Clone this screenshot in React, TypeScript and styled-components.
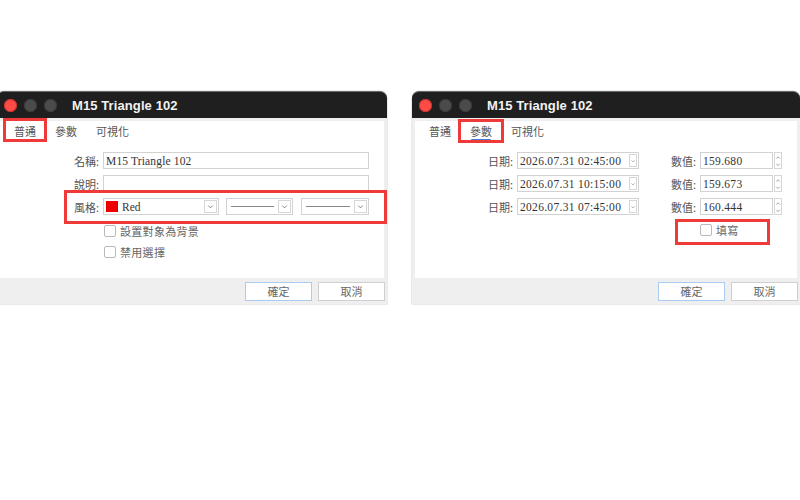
import * as React from "react"
import styled, { createGlobalStyle } from "styled-components"

const GlobalStyle = createGlobalStyle`
  html, body {
    margin: 0;
    background: #ffffff;
    font-family: "Noto Sans CJK TC", "Noto Sans", sans-serif;
  }
`

const CJK = `"Noto Sans CJK TC", "Noto Sans", sans-serif`
const VALUE_FONT = `"Liberation Serif", "Noto Sans CJK TC", serif`

const Chevron: React.FC<{ up?: boolean; size?: number }> = ({ up, size = 9 }) => (
  <svg width={size} height={size} viewBox="0 0 10 10">
    <polyline
      points={up ? "2.5,6.5 5,4 7.5,6.5" : "2.5,4 5,6.5 7.5,4"}
      fill="none"
      stroke="#777"
      strokeWidth="1"
    />
  </svg>
)

interface DialogProps {
  title: string
  tabs: string[]
  activeTab: number
  underline?: boolean
  width: number
  offset?: number
  children: React.ReactNode
  highlights?: { top: number; left: number; width: number; height: number }[]
}

const Dialog: React.FC<DialogProps> = ({
  title,
  tabs,
  activeTab,
  underline,
  width,
  offset = 0,
  children,
  highlights = []
}) => (
  <Window $width={width} $offset={offset}>
    <TitleBar>
      <Lights>
        <Light $color="#fd4b46" $ring="#c9302c" />
        <Light $color="#4b4b4b" $ring="#3a3a3a" />
        <Light $color="#4b4b4b" $ring="#3a3a3a" />
      </Lights>
      <Title>{title}</Title>
    </TitleBar>
    <Panel>
      <TabBar>
        {tabs.map((t, i) => (
          <Tab key={t} $active={underline === true && i === activeTab}>
            {t}
          </Tab>
        ))}
      </TabBar>
      {children}
    </Panel>
    <Footer>
      <FooterButton $primary>確定</FooterButton>
      <FooterButton>取消</FooterButton>
    </Footer>
    {highlights.map((h, i) => (
      <Highlight
        key={i}
        style={{ top: h.top, left: h.left, width: h.width, height: h.height }}
      />
    ))}
  </Window>
)

const App: React.FC = () => {
  const dates = [
    { date: "2026.07.31 02:45:00", value: "159.680" },
    { date: "2026.07.31 10:15:00", value: "159.673" },
    { date: "2026.07.31 07:45:00", value: "160.444" }
  ]

  return (
    <>
      <GlobalStyle />
      <Page>
        <Dialog
          title="M15 Triangle 102"
          tabs={["普通", "參數", "可視化"]}
          activeTab={0}
          width={390}
          offset={-3}
          highlights={[
            { top: 27, left: 6, width: 44, height: 24 },
            { top: 99, left: 67, width: 323, height: 34 }
          ]}
        >
          <GeneralForm>
            <Label>名稱:</Label>
            <TextInput>M15 Triangle 102</TextInput>
            <Label>說明:</Label>
            <TextInput />
            <Label>風格:</Label>
            <StyleRow>
              <Combo $width={116}>
                <Swatch />
                <ComboText>Red</ComboText>
                <DropButton>
                  <Chevron />
                </DropButton>
              </Combo>
              <Combo $width={67}>
                <LineSample />
                <DropButton>
                  <Chevron />
                </DropButton>
              </Combo>
              <Combo $width={68}>
                <LineSample />
                <DropButton>
                  <Chevron />
                </DropButton>
              </Combo>
            </StyleRow>
            <CheckList>
              <CheckRow>
                <CheckBox />
                <CheckLabel>設置對象為背景</CheckLabel>
              </CheckRow>
              <CheckRow>
                <CheckBox />
                <CheckLabel>禁用選擇</CheckLabel>
              </CheckRow>
            </CheckList>
          </GeneralForm>
        </Dialog>

        <Dialog
          title="M15 Triangle 102"
          tabs={["普通", "參數", "可視化"]}
          activeTab={1}
          underline
          width={388}
          highlights={[
            { top: 28, left: 46, width: 46, height: 24 },
            { top: 128, left: 263, width: 95, height: 26 }
          ]}
        >
          <ParamsForm>
            {dates.map((d) => (
              <React.Fragment key={d.date}>
                <Label>日期:</Label>
                <DateInput>
                  <ValueText>{d.date}</ValueText>
                  <SmallDrop>
                    <Chevron size={8} />
                  </SmallDrop>
                </DateInput>
                <Label>數值:</Label>
                <NumberInput>
                  <ValueText>{d.value}</ValueText>
                </NumberInput>
                <Spin>
                  <Chevron up size={8} />
                  <Chevron size={8} />
                </Spin>
              </React.Fragment>
            ))}
            <FillRow>
              <CheckBox />
              <CheckLabel>填寫</CheckLabel>
            </FillRow>
          </ParamsForm>
        </Dialog>
      </Page>
    </>
  )
}

const Page = styled.div`
  width: 800px;
  height: 500px;
  overflow: hidden;
  display: flex;
  align-items: flex-start;
  gap: 25px;
  padding-top: 91px;
  box-sizing: border-box;
`

const Window = styled.div<{ $width: number; $offset: number }>`
  position: relative;
  flex: none;
  width: ${(p) => p.$width}px;
  margin-left: ${(p) => p.$offset}px;
  background: #efefef;
  border-radius: 7px 7px 0 0;
  box-shadow: 0 0 0 0.5px #d6d6d6;
`

const TitleBar = styled.div`
  height: 27px;
  display: flex;
  align-items: center;
  padding-left: 7px;
  background: #1f1f1f;
  border-top: 1px solid #6a6a6a;
  border-radius: 7px 7px 0 0;
  box-sizing: border-box;
`

const Lights = styled.div`
  display: flex;
  gap: 7px;
`

const Light = styled.span<{ $color: string; $ring: string }>`
  width: 13px;
  height: 13px;
  border-radius: 50%;
  background: ${(p) => p.$color};
  box-shadow: inset 0 0 0 1px ${(p) => p.$ring};
`

const Title = styled.div`
  margin-left: 15px;
  color: #f2f2f2;
  font-family: "Liberation Sans", Arial, sans-serif;
  font-weight: 700;
  font-size: 13px;
  letter-spacing: 0.1px;
`

const Panel = styled.div`
  margin: 3px 3px 0;
  height: 157px;
  background: #ffffff;
  box-sizing: border-box;
`

const TabBar = styled.div`
  display: flex;
  height: 20px;
  padding-left: 5px;
  gap: 1px;
`

const Tab = styled.div<{ $active: boolean }>`
  position: relative;
  padding: 0 9px;
  font-family: ${CJK};
  font-size: 11px;
  line-height: 20px;
  color: #555;

  &::after {
    content: "";
    display: ${(p) => (p.$active ? "block" : "none")};
    position: absolute;
    left: 10px;
    right: 10px;
    bottom: 0;
    height: 2px;
    border-radius: 1px;
    background: #3d7fd9;
  }
`

const Footer = styled.div`
  height: 26px;
  display: flex;
  align-items: center;
  justify-content: flex-end;
  gap: 6px;
  padding-right: 2px;
`

const FooterButton = styled.div<{ $primary?: boolean }>`
  width: 67px;
  height: 19px;
  box-sizing: border-box;
  display: flex;
  align-items: center;
  justify-content: center;
  background: #ffffff;
  border: 1px solid ${(p) => (p.$primary ? "#a9cdf2" : "#cfcfcf")};
  font-family: ${CJK};
  font-size: 11px;
  color: #666;
`

const Highlight = styled.div`
  position: absolute;
  box-sizing: border-box;
  border: 3px solid #f03a3a;
  pointer-events: none;
`

const GeneralForm = styled.div`
  display: grid;
  grid-template-columns: 103px 266px;
  grid-auto-rows: 17px;
  row-gap: 6px;
  padding-top: 11px;
`

const Label = styled.div`
  display: flex;
  align-items: center;
  justify-content: flex-end;
  padding-right: 4px;
  font-family: ${CJK};
  font-size: 11px;
  color: #555;
  white-space: nowrap;
`

const InputBox = styled.div`
  box-sizing: border-box;
  height: 17px;
  display: flex;
  align-items: center;
  background: #ffffff;
  border: 1px solid #d2d2d2;
  overflow: hidden;
`

const TextInput = styled(InputBox)`
  padding-left: 2px;
  font-family: ${VALUE_FONT};
  font-size: 11.5px;
  letter-spacing: 0.15px;
  color: #333;
`

const StyleRow = styled.div`
  display: flex;
  gap: 7px;
`

const Combo = styled(InputBox)<{ $width: number }>`
  width: ${(p) => p.$width}px;
  padding: 0 1px 0 2px;
  & + & + & {
    margin-left: 1px;
  }
`

const Swatch = styled.span`
  width: 12px;
  height: 11px;
  background: #ee0000;
  margin-right: 4px;
  flex: none;
`

const ComboText = styled.span`
  flex: 1;
  font-family: ${VALUE_FONT};
  font-size: 11.5px;
  color: #333;
`

const LineSample = styled.span`
  flex: 1;
  height: 1px;
  margin: 0 4px 0 2px;
  background: #8a8a8a;
`

const DropButton = styled.span`
  flex: none;
  width: 13px;
  height: 13px;
  box-sizing: border-box;
  border: 1px solid #d6d6d6;
  display: flex;
  align-items: center;
  justify-content: center;
`

const CheckList = styled.div`
  grid-column: 2;
  display: flex;
  flex-direction: column;
  gap: 9px;
  padding: 4px 0 0 1px;
`

const CheckRow = styled.div`
  display: flex;
  align-items: center;
  gap: 4px;
  height: 12px;
`

const CheckBox = styled.span`
  flex: none;
  width: 12px;
  height: 12px;
  box-sizing: border-box;
  border: 1px solid #b9b9b9;
  border-radius: 2px;
  background: #fff;
`

const CheckLabel = styled.span`
  font-family: ${CJK};
  font-size: 11px;
  color: #666;
  letter-spacing: 0.3px;
`

const ParamsForm = styled.div`
  display: grid;
  grid-template-columns: 102px 122px 61px 73px 9px;
  grid-auto-rows: 17px;
  row-gap: 6px;
  padding-top: 11px;
`

const ValueText = styled.span`
  flex: 1;
  padding-left: 2px;
  font-family: ${VALUE_FONT};
  font-size: 11.5px;
  letter-spacing: 0.3px;
  color: #333;
  white-space: nowrap;
`

const DateInput = styled(InputBox)`
  padding-right: 1px;
`

const SmallDrop = styled.span`
  flex: none;
  width: 8px;
  height: 13px;
  box-sizing: border-box;
  border: 1px solid #d6d6d6;
  display: flex;
  align-items: center;
  justify-content: center;
`

const NumberInput = styled(InputBox)``

const Spin = styled.div`
  display: flex;
  flex-direction: column;
  align-items: center;
  justify-content: center;
  margin-left: 1px;
  box-sizing: border-box;
  border: 1px solid #d6d6d6;

  & > svg {
    height: 7px;
  }
`

const FillRow = styled.div`
  grid-column: 4 / span 2;
  display: flex;
  align-items: center;
  gap: 4px;
`

export default App
